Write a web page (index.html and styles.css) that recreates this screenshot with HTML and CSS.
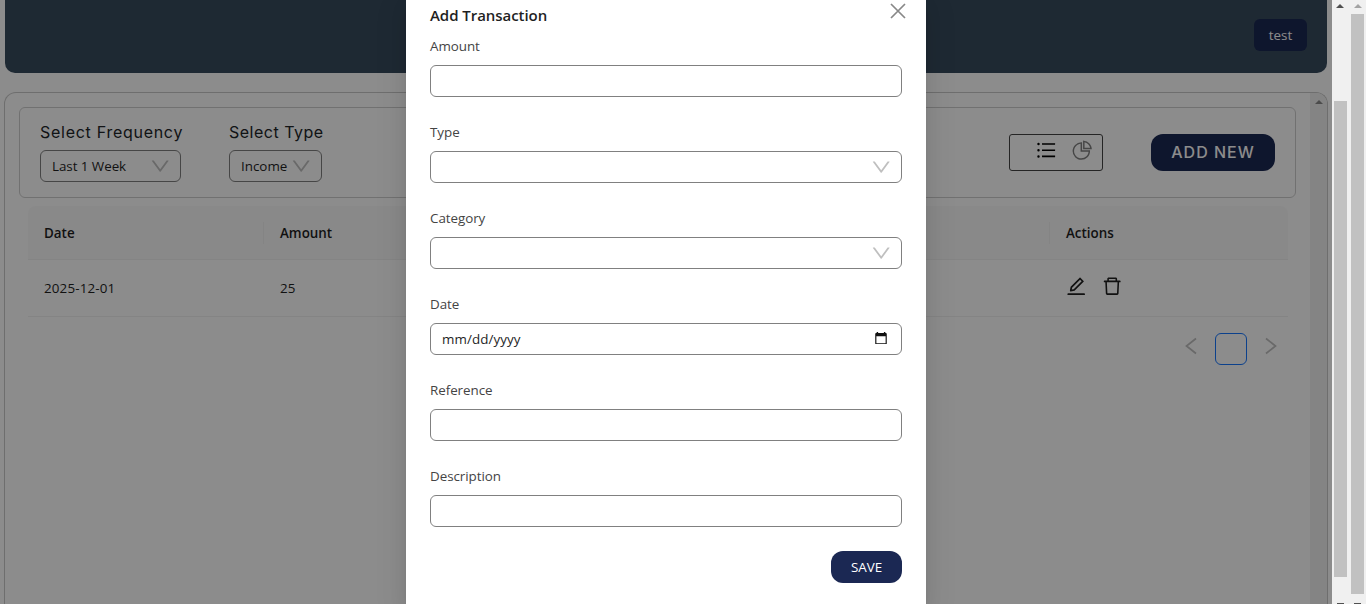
FILE: index.html
```
<!DOCTYPE html>
<html lang="en">
<head>
<meta charset="utf-8">
<title>Transactions</title>
<link rel="stylesheet" href="styles.css">
</head>
<body>
<svg class="defs" width="0" height="0">
  <symbol id="down" viewBox="0 0 1024 1024"><path d="M884 256h-75c-5.1 0-9.9 2.5-12.9 6.6L512 654.2 227.9 262.6c-3-4.1-7.8-6.6-12.9-6.6h-75c-6.5 0-10.3 7.4-6.5 12.7l352.6 486.1c12.8 17.6 39 17.6 51.7 0l352.6-486.1c3.9-5.3.1-12.7-6.4-12.7z"/></symbol>
</svg>
<div class="window">
  <div class="app">
    <header class="topbar"><button class="user">test</button></header>
    <main class="content">
      <div class="panel">
        <section class="filters">
          <div class="filter frequency"><h6>Select Frequency</h6><div class="select"><span>Last 1 Week</span><svg class="icon muted"><use href="#down"/></svg></div></div>
          <div class="filter type"><h6>Select Type</h6><div class="select"><span>Income</span><svg class="icon muted"><use href="#down"/></svg></div></div>
          <div class="switch">
            <svg class="icon" viewBox="0 0 1024 1024"><path d="M912 192H328c-4.400 0-8 3.600-8 8v56c0 4.400 3.600 8 8 8h584c4.400 0 8-3.600 8-8v-56c0-4.400-3.600-8-8-8zm0 284H328c-4.400 0-8 3.600-8 8v56c0 4.400 3.600 8 8 8h584c4.400 0 8-3.600 8-8v-56c0-4.400-3.600-8-8-8zm0 284H328c-4.400 0-8 3.600-8 8v56c0 4.400 3.600 8 8 8h584c4.400 0 8-3.600 8-8v-56c0-4.400-3.600-8-8-8zM104 228a56 56 0 10112 0 56 56 0 10-112 0zm0 284a56 56 0 10112 0 56 56 0 10-112 0zm0 284a56 56 0 10112 0 56 56 0 10-112 0z"/></svg>
            <svg class="icon inactive" viewBox="0 0 1024 1024"><path d="M864 518H506V160c0-4.400-3.600-8-8-8h-26a398.460 398.460 0 00-282.800 117.100 398.190 398.190 0 00-85.700 127.100A397.610 397.610 0 0072 552a398.460 398.460 0 00117.100 282.800c36.700 36.700 79.500 65.600 127.100 85.700A397.610 397.610 0 00472 952a398.460 398.460 0 00282.800-117.100c36.700-36.700 65.600-79.500 85.700-127.100A397.610 397.610 0 00872 552v-26c0-4.400-3.600-8-8-8zM705.700 787.800A331.590 331.590 0 01470.400 884c-88.100-.4-170.900-34.900-233.200-97.200C174.500 724.100 140 640.700 140 552c0-88.700 34.500-172.100 97.200-234.800 54.600-54.600 124.900-87.900 200.800-95.500V586h364.300c-7.700 76.300-41.300 147-96.600 201.800zM952 462.400l-2.600-28.200c-8.500-92.100-49.400-179-115.200-244.600A399.400 399.400 0 00589 74.600L560.700 72c-4.700-.4-8.700 3.200-8.700 7.900V464c0 4.400 3.600 8 8 8l384-1c4.700 0 8.400-4 8-8.600zm-332.200-58.200V147.600a332.240 332.240 0 01166.400 89.800c45.700 45.600 77 103.600 90 166.100l-256.400.7z"/></svg>
          </div>
          <button class="add">ADD NEW</button>
        </section>
        <section class="table">
          <div class="row head"><div class="cell">Date</div><div class="cell">Amount</div><div class="cell">Actions</div></div>
          <div class="row"><div class="cell">2025-12-01</div><div class="cell">25</div><div class="cell actions">
            <svg class="icon" viewBox="0 0 1024 1024"><path d="M257.700 752c2 0 4-.2 6-.5L431.900 722c2-.4 3.900-1.300 5.300-2.800l423.900-423.900a9.960 9.960 0 000-14.100L694.900 114.900c-1.900-1.900-4.400-2.900-7.100-2.900s-5.200 1-7.100 2.900L256.800 538.800c-1.500 1.500-2.400 3.300-2.800 5.300l-29.500 168.200a33.500 33.500 0 009.400 29.800c6.600 6.400 14.900 9.900 23.800 9.900zm67.400-174.400L687.800 215l73.300 73.300-362.700 362.600-88.900 15.700 15.600-89zM880 836H144c-17.700 0-32 14.300-32 32v36c0 4.400 3.600 8 8 8h784c4.400 0 8-3.600 8-8v-36c0-17.700-14.300-32-32-32z"/></svg>
            <svg class="icon" viewBox="0 0 1024 1024"><path d="M360 184h-8c4.400 0 8-3.600 8-8v8h304v-8c0 4.400 3.600 8 8 8h-8v72h72v-80c0-35.300-28.700-64-64-64H352c-35.300 0-64 28.700-64 64v80h72v-72zm504 72H160c-17.700 0-32 14.300-32 32v32c0 4.400 3.600 8 8 8h60.400l24.700 523c1.600 34.100 29.800 61 63.900 61h454c34.200 0 62.300-26.800 63.900-61l24.700-523H888c4.400 0 8-3.600 8-8v-32c0-17.700-14.300-32-32-32zM731.300 840H292.700l-24.200-512h487l-24.200 512z"/></svg>
          </div></div>
        </section>
        <nav class="pages">
          <svg class="arrow" viewBox="0 0 12 18"><path d="M11 1.500 1.500 9l9.500 7.500"/></svg>
          <span class="page"></span>
          <svg class="arrow" viewBox="0 0 12 18"><path d="M1 1.500 10.500 9 1 16.500"/></svg>
        </nav>
      </div>
      <div class="inner-scroll"><i class="tri"></i></div>
    </main>
    <div class="mask">
      <form class="modal">
        <div class="modal-head"><h2>Add Transaction</h2><svg class="close" viewBox="0 0 16 16"><path d="M1 1l14 14M15 1 1 15"/></svg></div>
        <div class="field"><label>Amount</label><div class="input"></div></div>
        <div class="field"><label>Type</label><div class="input"><svg class="icon muted"><use href="#down"/></svg></div></div>
        <div class="field"><label>Category</label><div class="input"><svg class="icon muted"><use href="#down"/></svg></div></div>
        <div class="field"><label>Date</label><div class="input"><span>mm/dd/yyyy</span><svg class="calendar" viewBox="0 0 12 13"><path d="M1.500 0H3v1h6V0h1.500v1h.5a1 1 0 0 1 1 1v10a1 1 0 0 1-1 1H1a1 1 0 0 1-1-1V2a1 1 0 0 1 1-1h.5zM1.200 4.500v7.300h9.600V4.500z"/></svg></div></div>
        <div class="field"><label>Reference</label><div class="input"></div></div>
        <div class="field"><label>Description</label><div class="input"></div></div>
        <div class="modal-foot"><button type="button" class="save">SAVE</button></div>
      </form>
    </div>
  </div>
  <div class="bar bar-inner"><i class="tri"></i><div class="thumb"></div><i class="tip"></i></div>
  <div class="bar bar-outer"><i class="tri"></i><div class="thumb"></div><i class="tip"></i></div>
</div>
</body>
</html>
```
FILE: styles.css
```
* { box-sizing: border-box; }
body { margin: 0; overflow: hidden; font: 14px/22px "Open Sans", "Noto Sans", sans-serif; color: #1f1f1f; }
button { border: 0; font-family: inherit; padding: 0; }
h2, h6 { margin: 0; }
.defs { position: absolute; }
.window { display: flex; height: 604px; overflow: hidden; }
.app { position: relative; width: 1332px; height: 604px; overflow: hidden; background: #fff; }
.icon { width: 22.4px; height: 22.4px; fill: currentColor; flex: none; }
.muted { color: rgba(0, 0, 0, .25); }

.topbar { height: 73px; margin: 0 5px; background: #384b5e; border-radius: 0 0 10px 10px; display: flex; justify-content: flex-end; padding: 19px 20px 0 0; }
.user { width: 53px; height: 32px; border-radius: 6px; background: #1b2853; color: #fff; font-size: 13.4px; padding-bottom: 1px; }

.content { margin: 19px 4px 0; height: 540px; border: 1px solid #c8c8c8; border-width: 1px 1px 0; border-radius: 12px 12px 0 0; display: flex; overflow: hidden; }
.panel { flex: 1; padding: 14px 14px 0; }
.inner-scroll { width: 17px; background: #f0f0f0; display: flex; justify-content: center; padding-top: 7px; }
.tri { width: 0; height: 0; border: 4px solid transparent; border-top: 0; border-bottom: 4px solid #8a8a8a; }

.filters { height: 91px; border: 1px solid #cecece; border-radius: 6px; padding: 0 20px; display: flex; align-items: flex-start; }
.filter { display: flex; flex-direction: column; padding-top: 15px; }
.filter h6 { font: 400 16px/19px Inter, sans-serif; white-space: nowrap; color: #212529; margin-bottom: 8px; }
.frequency { width: 141px; margin-right: 48px; }
.frequency h6 { letter-spacing: .72px; }
.type { width: 93px; }
.type h6 { letter-spacing: .5px; }
.select { height: 32px; border: 1px solid #808080; border-radius: 6px; display: flex; justify-content: space-between; align-items: center; padding: 0 9px 0 11px; font-size: 13.4px; }
.frequency .select { letter-spacing: -.05px; }
.switch { margin: 26px 48px 0 auto; width: 94px; height: 37px; border: 1px solid #444; border-radius: 3px; display: flex; gap: 14px; padding: 4px 0 0 25px; color: #000; }
.inactive { color: #808080; }
.add { width: 124px; height: 37px; margin-top: 26px; border-radius: 12px; background: #1b2853; color: #fff; font: 500 16px Inter, sans-serif; letter-spacing: 1px; padding-bottom: 1px; }

.table { margin: 8px 8px 0 9px; }
.row { display: grid; grid-template-columns: 236px 786px 1fr; height: 57px; border-bottom: 1px solid #f0f0f0; align-items: center; padding-bottom: 1px; }
.head { height: 54px; background: #fafafa; font-weight: 600; border-radius: 8px 8px 0 0; padding-bottom: 0; }
.cell { padding-left: 16px; font-size: 13.4px; }
.row:not(.head) .cell:first-child { letter-spacing: .14px; }
.head .cell { border-right: 1px solid #f0f0f0; }
.head .cell:last-child { border: 0; }
.cell.actions { display: flex; gap: 13.6px; padding: 0 0 3px 15.4px; }
.pages { display: flex; justify-content: flex-end; padding: 16px 18px 0 0; }
.page { width: 32px; height: 32px; border: 1px solid #1677ff; border-radius: 6px; margin: 0 18px 0 18px; }
.arrow { width: 12px; height: 18px; margin-top: 4px; fill: none; stroke: #bfbfbf; stroke-width: 1.7; }
.arrow:last-child { margin-right: 1px; }

.mask { position: absolute; inset: 0; background: rgba(0, 0, 0, .45); padding-left: 406px; }
.modal { width: 520px; height: 604px; background: #fff; padding: 3px 24px 0; box-shadow: 0 6px 16px rgba(0, 0, 0, .08), 0 3px 6px -4px rgba(0, 0, 0, .12), 0 9px 28px 8px rgba(0, 0, 0, .05); }
.modal-head { display: flex; justify-content: space-between; height: 32px; }
.modal-head h2 { font: 600 15px/24px "Open Sans", sans-serif; letter-spacing: -.05px; }
.close { width: 16px; height: 16px; margin: 0 -4px 0 0; fill: none; stroke: #888; stroke-width: 1.7; }
.field { height: 86px; display: flex; flex-direction: column; gap: 8px; }
.field label { font-size: 13.4px; color: #444; letter-spacing: -.05px; }
.input { height: 32px; border: 1px solid #808080; border-radius: 6px; display: flex; align-items: center; padding: 0 9px 0 11px; font-size: 13.4px; }
.input span { letter-spacing: .08px; }
.input svg { margin-left: auto; }
.input .calendar { width: 12px; height: 12.5px; margin: 0 5px 2px auto; fill: #111; }
.modal-foot { display: flex; justify-content: flex-end; }
.save { width: 71px; height: 32px; border-radius: 12px; background: #1b2853; color: #fff; font-size: 13.4px; }

.bar { width: 17px; height: 604px; background: #f0f0f0; display: flex; flex-direction: column; align-items: center; padding-top: 4px; }
.bar-inner { padding-right: 1px; }
.bar-inner .tri { border-bottom-color: #505050; }
.bar-outer .tri { border-bottom-color: #a3a3a3; }
.bar .thumb { width: 13px; background: #c1c1c1; }
.bar-inner .thumb { margin-top: 93px; height: 476px; }
.bar-outer .thumb { margin-top: 6px; height: 580px; }
.tip { width: 7px; height: 1px; margin-top: auto; background: #505050; }
```
